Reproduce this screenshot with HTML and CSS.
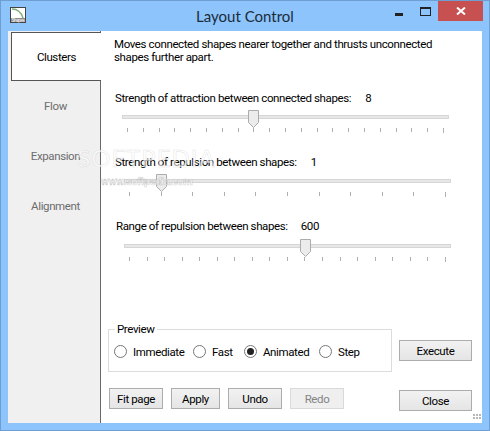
FILE: index.html
```html
<!DOCTYPE html>
<html lang="en">
  <head>
    <meta charset="UTF-8" />
    <title>Layout Control</title>
    <link rel="stylesheet" href="styles.css">
  </head>
  <body>
    <div class="window">
      <div class="titlebar">
        <svg class="app-icon" width="16" height="16" viewBox="0 0 16 16">
          <rect x="0.5" y="0.5" width="15" height="15" fill="#fff" stroke="#444" />
          <path d="M2 2 C7 2 11 5 13 11" fill="none" stroke="#7fae7a" stroke-width="1.5" />
          <rect x="1" y="11" width="14" height="4" fill="#8a8a8a" />
          <text x="8" y="15" text-anchor="middle" font-size="4.5" fill="#fff" font-family="Liberation Sans, sans-serif">Shapes</text>
        </svg>
        <div class="title">Layout Control</div>
        <div class="controls">
          <span class="minimize"></span>
          <span class="maximize"></span>
          <span class="close-x">
            <svg width="10" height="8" viewBox="0 0 10 8">
              <path d="M1 0.5 L9 7.5 M9 0.5 L1 7.5" stroke="#fff" stroke-width="2" />
            </svg>
          </span>
        </div>
      </div>

      <div class="client">
        <div class="tabs">
          <div class="tab tab-active">Clusters</div>
          <div class="tab">Flow</div>
          <div class="tab">Expansion</div>
          <div class="tab">Alignment</div>
        </div>

        <div class="main">
          <p class="description">Moves connected shapes nearer together and thrusts unconnected shapes further apart.</p>

          <div class="slider slider-attract">
            <div class="slider-label"><span>Strength of attraction between connected shapes:</span><span>8</span></div>
            <div class="track">
              <svg class="thumb" style="left: 126px" width="11" height="18" viewBox="0 0 11 18"><path d="M0.5 0.5 H10.5 V12.5 L5.5 17.5 L0.5 12.5 Z" /></svg>
            </div>
            <div class="ticks">
              <i></i><i></i><i></i><i></i><i></i><i></i><i></i><i></i><i></i><i></i><i></i>
              <i></i><i></i><i></i><i></i><i></i><i></i><i></i><i></i><i></i><i></i>
            </div>
          </div>

          <div class="slider slider-repulse">
            <div class="slider-label"><span>Strength of repulsion between shapes:</span><span>1</span></div>
            <div class="track">
              <svg class="thumb" style="left: 32px" width="11" height="18" viewBox="0 0 11 18"><path d="M0.5 0.5 H10.5 V12.5 L5.5 17.5 L0.5 12.5 Z" /></svg>
            </div>
            <div class="ticks">
              <i></i><i></i><i></i><i></i><i></i><i></i><i></i><i></i><i></i><i></i><i></i>
            </div>
          </div>

          <div class="slider slider-range">
            <div class="slider-label"><span>Range of repulsion between shapes:</span><span>600</span></div>
            <div class="track">
              <svg class="thumb" style="left: 176px" width="11" height="18" viewBox="0 0 11 18"><path d="M0.5 0.5 H10.5 V12.5 L5.5 17.5 L0.5 12.5 Z" /></svg>
            </div>
            <div class="ticks">
              <i></i><i></i><i></i><i></i><i></i><i></i><i></i><i></i><i></i><i></i>
              <i></i><i></i><i></i><i></i><i></i><i></i><i></i><i></i><i></i>
            </div>
          </div>

          <div class="footer">
            <div class="footer-left">
              <fieldset class="preview">
                <legend>Preview</legend>
                <label class="radio radio-immediate"><span class="dot"></span>Immediate</label>
                <label class="radio radio-fast"><span class="dot"></span>Fast</label>
                <label class="radio radio-animated"><span class="dot dot-on"></span>Animated</label>
                <label class="radio"><span class="dot"></span>Step</label>
              </fieldset>
              <div class="actions">
                <button class="btn btn-fit">Fit page</button>
                <button class="btn btn-apply">Apply</button>
                <button class="btn btn-undo">Undo</button>
                <button class="btn btn-undo btn-disabled">Redo</button>
              </div>
            </div>
            <div class="footer-right">
              <button class="btn btn-wide">Execute</button>
              <button class="btn btn-wide">Close</button>
            </div>
          </div>

          <div class="grip"><i></i><i></i><i></i><i></i><i></i><i></i></div>
        </div>

        <div class="watermark">
          <span class="wm-name">SOFTPEDIA</span>
          <span class="wm-url">www.softpedia.com</span>
        </div>
      </div>
    </div>
  </body>
</html>
```

FILE: styles.css
```css
* {
  box-sizing: border-box;
}

body {
  margin: 0;
  background: #8cc4fb;
  font-family: Roboto, sans-serif;
  font-size: 11.5px;
  letter-spacing: -0.38px;
  color: #000;
}

.window {
  width: 490px;
  height: 431px;
  padding: 0 7px 7px;
  background: #8cc4fb;
  border: 1px solid #6f9fd2;
  display: flex;
  flex-direction: column;
}

/* Title bar */
.titlebar {
  height: 30px;
  flex: none;
  display: grid;
  grid-template-columns: 1fr auto 1fr;
}

.app-icon {
  margin: 6px 0 0 2px;
}

.title {
  font-family: Lato, sans-serif;
  font-size: 15px;
  line-height: 30px;
  letter-spacing: 0;
  color: #1c2b3a;
}

.controls {
  display: flex;
  justify-content: flex-end;
  margin-right: -1px;
}

.minimize {
  width: 8px;
  height: 3px;
  margin: 12px 17px 0 0;
  background: #222;
}

.maximize {
  width: 11px;
  height: 9px;
  margin: 6px 7px 0 0;
  border: 1px solid #222;
  border-top-width: 2px;
}

.close-x {
  width: 45px;
  height: 20px;
  background: #c75050;
  display: flex;
  align-items: center;
  justify-content: center;
}

/* Client area */
.client {
  position: relative;
  flex: 1;
  display: flex;
  background: #fff;
}

.tabs {
  width: 93px;
  flex: none;
  padding: 1px 0 0 3px;
  background: #f0f0f0;
  border-right: 1px solid #696969;
}

.tab {
  height: 50px;
  display: flex;
  align-items: center;
  justify-content: center;
  color: #6d6d6d;
}

.tab-active {
  height: 49px;
  margin-right: -1px;
  position: relative;
  background: #fff;
  color: #000;
  border: 1px solid #555;
  border-right: none;
}

.main {
  position: relative;
  flex: 1;
  display: flex;
  flex-direction: column;
  padding: 7px 10px 12px 7px;
}

.description {
  margin: 0 0 0 6px;
  width: 345px;
  line-height: 13px;
}

/* Sliders */
.slider {
  width: 345px;
}

.slider-label {
  display: flex;
  gap: 14px;
  margin-left: 7px;
  line-height: 14px;
}

.track {
  position: relative;
  width: 327px;
  height: 4px;
  margin: 10px 0 0 14px;
  background: #e7e7e7;
  border: 1px solid #d6d6d6;
}

.thumb {
  position: absolute;
  top: -6px;
  margin-left: -1px;
}

.thumb path {
  fill: #ececec;
  stroke: #acacac;
}

.ticks {
  display: flex;
  justify-content: space-between;
  width: 317px;
  height: 5px;
  margin: 9px 0 0 19px;
}

.ticks i {
  width: 1px;
  height: 4px;
  background: #b0b0b0;
}

.ticks i:last-child {
  height: 5px;
}

.slider-attract {
  margin-top: 27px;
}

.slider-repulse {
  margin-top: 22px;
}

.slider-repulse .track,
.slider-range .track {
  margin-left: 16px;
}

.slider-repulse .ticks,
.slider-range .ticks {
  margin-left: 21px;
}

.slider-range {
  margin-top: 22px;
}

.slider-range .slider-label {
  margin-left: 8px;
  gap: 13px;
}

.slider-range .track {
  margin-top: 11px;
}

/* Bottom part */
.footer {
  margin-top: auto;
  display: flex;
  justify-content: space-between;
}

.footer-left {
  width: 284px;
}

.preview {
  height: 48px;
  margin: 0;
  padding: 0 0 0 5px;
  display: flex;
  align-items: center;
  border: 1px solid #dcdcdc;
}

.preview legend {
  margin-left: 1px;
  padding: 0 2px;
  line-height: 10px;
}

.radio {
  display: flex;
  align-items: center;
  gap: 6px;
  margin-top: -2px;
}

.radio-immediate {
  width: 79px;
}

.radio-fast {
  width: 51px;
}

.radio-animated {
  width: 75px;
}

.dot {
  width: 13px;
  height: 13px;
  display: flex;
  align-items: center;
  justify-content: center;
  background: #fff;
  border: 1px solid #777;
  border-radius: 50%;
}

.dot-on::after {
  content: "";
  width: 7px;
  height: 7px;
  background: #222;
  border-radius: 50%;
}

.actions {
  display: flex;
  gap: 8px;
  margin: 16px 0 0 1px;
}

.btn {
  height: 21px;
  padding: 0;
  font: inherit;
  letter-spacing: inherit;
  color: #000;
  background: linear-gradient(#f2f2f2, #e5e5e5);
  border: 1px solid #acacac;
}

.btn-fit {
  width: 54px;
}

.btn-apply {
  width: 49px;
}

.btn-undo {
  width: 54px;
}

.btn-disabled {
  color: #838383;
  background: #efefef;
  border-color: #d9d9d9;
}

.footer-right {
  width: 73px;
  padding-top: 16px;
}

.btn-wide {
  display: block;
  width: 73px;
  margin-bottom: 29px;
}

.btn-wide:last-child {
  margin-bottom: 0;
}

.grip {
  position: absolute;
  right: 1px;
  bottom: 1px;
  display: grid;
  grid-template-columns: repeat(3, 2px);
  grid-template-rows: repeat(3, 2px);
  gap: 1px;
}

.grip i {
  background: #b8b8b8;
}

.grip i:nth-child(1) {
  grid-column: 3;
  grid-row: 1;
}

.grip i:nth-child(2) {
  grid-column: 2;
  grid-row: 2;
}

.grip i:nth-child(3) {
  grid-column: 3;
  grid-row: 2;
}

/* Softpedia stamp lying over the window */
.watermark {
  position: absolute;
  left: 71px;
  top: 113px;
  display: flex;
  flex-direction: column;
  align-items: center;
  width: 135px;
  pointer-events: none;
}

.wm-name {
  font-family: Lato, sans-serif;
  font-size: 24px;
  line-height: 28px;
  letter-spacing: 1px;
  color: rgba(255, 255, 255, 0.6);
  -webkit-text-stroke: 0.5px rgba(185, 185, 185, 0.45);
}

.wm-url {
  margin-top: 3px;
  font-size: 11px;
  line-height: 14px;
  font-weight: 700;
  color: rgba(255, 255, 255, 0.6);
  -webkit-text-stroke: 0.5px rgba(170, 170, 170, 0.6);
}
```
